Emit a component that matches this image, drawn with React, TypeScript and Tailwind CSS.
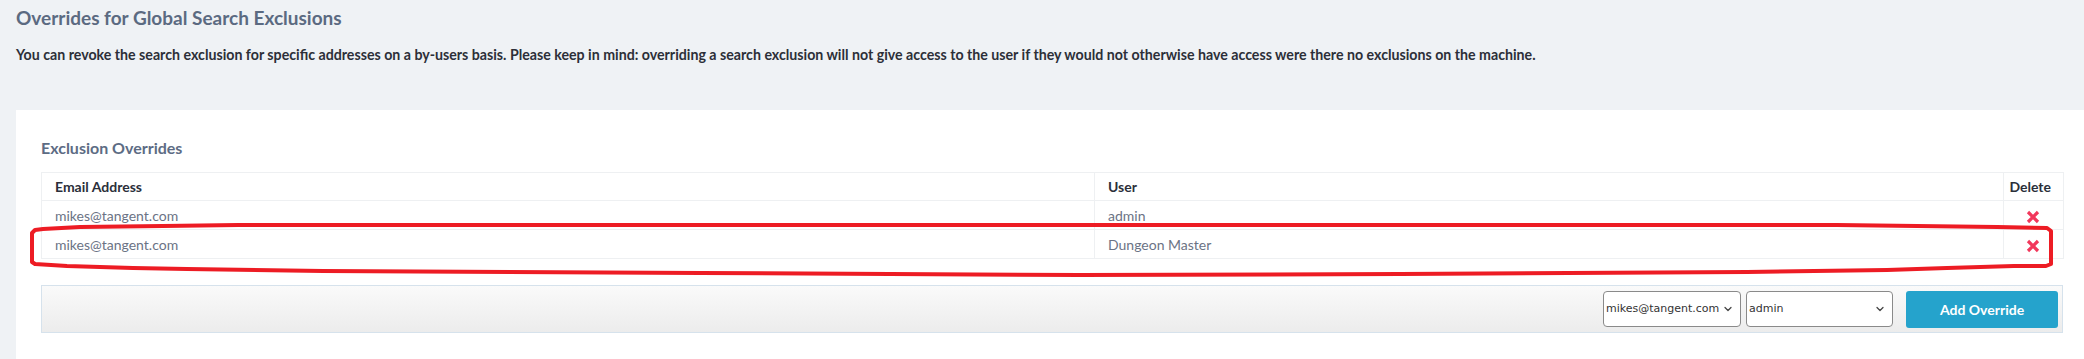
import React from "react";
import { ChevronDown } from "lucide-react";

const rows = [
  { email: "mikes@tangent.com", user: "admin" },
  { email: "mikes@tangent.com", user: "Dungeon Master" },
];

// freehand red marker drawn around the second row
const markerPath =
  "M238,225 L1837,225 L1917,226 L1997,227 L2047,228 L2051,231 L2051,264 L2046,266 L2014,266 L1947,268 L1887,270 L1747,272 L1400,274 L1080,275 L700,273 L323,271 L187,269 L133,268 L67,266 L35,264 L32,262 L32,233 L35,230 L43,229 L80,227 L163,226 Z";

const DeleteIcon = () => (
  <svg width="14" height="14" viewBox="0 0 14 14" className="inline-block align-middle">
    <path d="M2 2 L12 12 M12 2 L2 12" stroke="#f2385c" strokeWidth="3.2" strokeLinecap="butt" />
  </svg>
);

export default function App() {
  return (
    <div className="relative w-[2084px] h-[359px] overflow-hidden bg-[#eff2f5] font-['Lato',sans-serif]">
      <div className="px-4 pt-[6px]">
        <h1 className="text-[19px] leading-6 font-bold text-[#5b6a81]">Overrides for Global Search Exclusions</h1>
        <p className="mt-[15px] text-[14.2px] leading-5 font-bold text-[#2c2f38]">
          You can revoke the search exclusion for specific addresses on a by-users basis. Please keep in mind: overriding a search exclusion will not give access to the user if they would not otherwise have access were there no exclusions on the machine.
        </p>
      </div>

      <div className="mt-[45px] ml-4 bg-white pl-[25px] pr-[21px] pt-7 h-[249px]">
        <h2 className="text-[16px] leading-5 font-bold text-[#5d6c84]">Exclusion Overrides</h2>

        <table className="mt-[14px] w-full table-fixed border-collapse border border-[#eef0f2] text-[14px]">
          <colgroup>
            <col className="w-[1053px]" />
            <col className="w-[909px]" />
            <col className="w-[60px]" />
          </colgroup>
          <thead>
            <tr className="h-[28px]">
              <th className="border border-[#eef0f2] px-[13px] text-left font-bold text-[#2b2f3a]">Email Address</th>
              <th className="border border-[#eef0f2] px-[13px] text-left font-bold text-[#2b2f3a]">User</th>
              <th className="border border-[#eef0f2] pl-0 pr-[12px] text-right font-bold text-[#2b2f3a]">Delete</th>
            </tr>
          </thead>
          <tbody>
            {rows.map((r, i) => (
              <tr key={i} className="h-[29px]">
                <td className="border border-[#eef0f2] px-[13px] text-[#6b7385]">{r.email}</td>
                <td className="border border-[#eef0f2] px-[13px] text-[#6b7385]">{r.user}</td>
                <td className="border border-[#eef0f2] pl-0 pr-[2px] text-center">
                  <DeleteIcon />
                </td>
              </tr>
            ))}
          </tbody>
        </table>

        <div className="mt-[26px] h-[48px] flex items-center justify-end gap-[13px] border border-[#d6e2ec] bg-[linear-gradient(#fafafa,#ececec)] pr-[4px]">
          <div className="flex items-center gap-[5px]">
            <div className="relative w-[138px] h-[36px] flex items-center rounded-[4px] border border-[#8a8a8a] bg-white pl-[2px] font-['DejaVu_Sans',sans-serif] text-[11px] text-[#333]">
              mikes@tangent.com
              <ChevronDown size={12} strokeWidth={2.5} className="absolute right-[6px] text-[#444]" />
            </div>
            <div className="relative w-[147px] h-[36px] flex items-center rounded-[4px] border border-[#8a8a8a] bg-white pl-[2px] font-['DejaVu_Sans',sans-serif] text-[11px] text-[#333]">
              admin
              <ChevronDown size={12} strokeWidth={2.5} className="absolute right-[6px] text-[#444]" />
            </div>
          </div>
          <button className="w-[152px] h-[37px] rounded-[3px] bg-[#25a3cc] text-[14px] font-bold text-white">Add Override</button>
        </div>
      </div>

      <svg className="absolute left-0 top-0 pointer-events-none" width="2084" height="359">
        <path d={markerPath} fill="none" stroke="#ed1c24" strokeWidth="4" strokeLinejoin="round" />
      </svg>
    </div>
  );
}
